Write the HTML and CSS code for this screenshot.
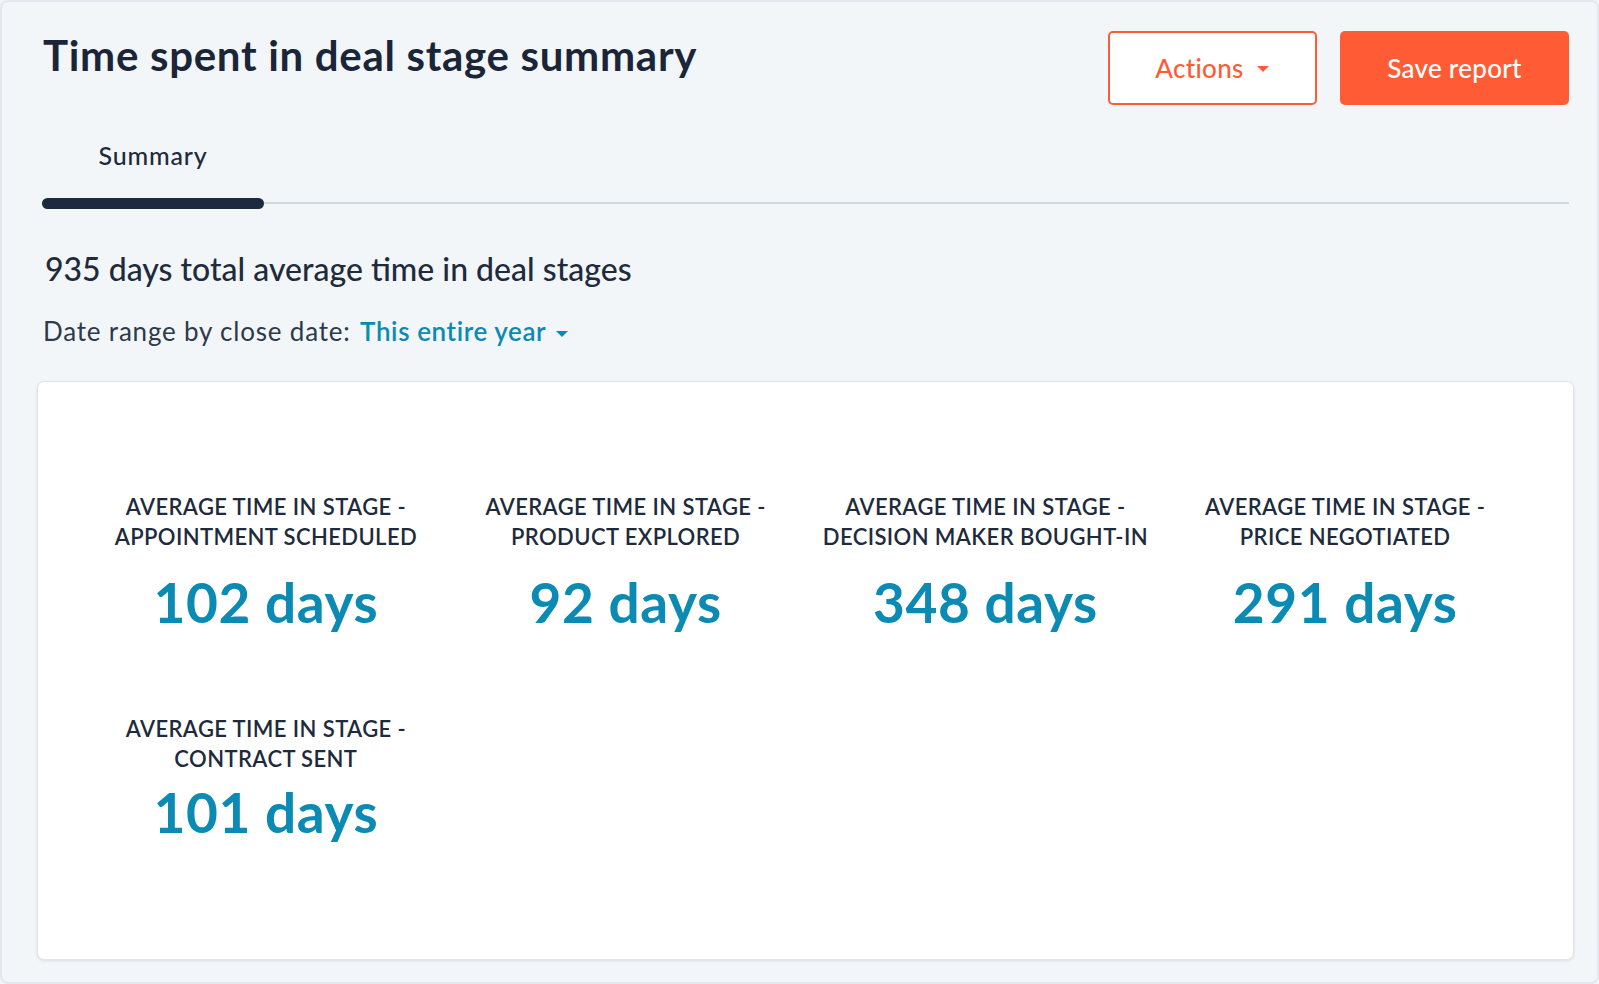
FILE: index.html
```html
<!DOCTYPE html>
<html lang="en">
<head>
    <meta charset="UTF-8">
    <meta name="viewport" content="width=device-width, initial-scale=1.0">
    <title>Time spent in deal stage summary</title>
    <link rel="stylesheet" href="styles.css">
</head>
<body>

<div class="frame">
    <header class="report-header">
        <h1>Time spent in deal stage summary</h1>
        <div class="header-actions">
            <button type="button" class="btn btn-secondary">
                Actions
                <svg class="caret" width="14" height="8" viewBox="0 0 14 8"><path d="M1 1h12L7 7z" fill="currentColor"/></svg>
            </button>
            <button type="button" class="btn btn-primary">Save report</button>
        </div>
    </header>

    <nav class="tabs">
        <a class="tab active" href="#">Summary</a>
    </nav>

    <p class="total">935 days total average time in deal stages</p>
    <p class="date-range">
        Date range by close date:
        <a href="#" class="range-link">This entire year
            <svg class="caret" width="14" height="8" viewBox="0 0 14 8"><path d="M1 1h12L7 7z" fill="currentColor"/></svg>
        </a>
    </p>

    <section class="card">
        <div class="stat-grid">
            <div class="stat">
                <div class="stat-label">Average time in stage -<br>Appointment scheduled</div>
                <div class="stat-value">102 days</div>
            </div>
            <div class="stat">
                <div class="stat-label">Average time in stage -<br>Product explored</div>
                <div class="stat-value">92 days</div>
            </div>
            <div class="stat">
                <div class="stat-label">Average time in stage -<br>Decision maker bought-in</div>
                <div class="stat-value">348 days</div>
            </div>
            <div class="stat">
                <div class="stat-label">Average time in stage -<br>Price negotiated</div>
                <div class="stat-value">291 days</div>
            </div>
            <div class="stat">
                <div class="stat-label">Average time in stage -<br>Contract sent</div>
                <div class="stat-value">101 days</div>
            </div>
        </div>
    </section>
</div>

</body>
</html>
```

FILE: styles.css
```css
* {
    box-sizing: border-box;
}
body {
    font-family: Lato, "Open Sans", sans-serif;
    margin: 0;
    background-color: #f2f5f8;
    color: #1e2b3c;
}
.frame {
    height: 984px;
    padding: 0 28px 0 40px;
    border: 2px solid #e3e8ee;
    border-radius: 8px;
    background-color: #f3f6f9;
}

/* header */
.report-header {
    display: flex;
    justify-content: space-between;
    align-items: flex-start;
    padding-top: 29px;
}
.report-header h1 {
    margin: 0;
    padding: 0 0 0 1px;
    font-size: 42px;
    line-height: 48px;
    font-weight: 700;
    letter-spacing: 0.7px;
    color: #1a2638;
}
.header-actions {
    display: flex;
    gap: 23px;
}
.btn {
    height: 74px;
    border-radius: 5px;
    font-family: inherit;
    font-size: 26px;
    font-weight: 500;
    letter-spacing: 0.3px;
    cursor: pointer;
    display: flex;
    align-items: center;
    justify-content: center;
    gap: 12px;
}
.btn-secondary {
    width: 209px;
    background-color: #fff;
    border: 2px solid #ff5c35;
    color: #ff5c35;
}
.btn-secondary .caret {
    margin-top: 2px;
}
.btn-primary {
    width: 229px;
    background-color: #ff5c35;
    border: none;
    color: #fff;
}

/* tabs */
.tabs {
    display: flex;
    margin-top: 27px;
    border-bottom: 2px solid #cfd8e3;
}
.tab {
    position: relative;
    width: 222px;
    padding: 8px 0 32px;
    text-align: center;
    font-size: 25px;
    font-weight: 500;
    letter-spacing: 0.8px;
    color: #1e2b3c;
    text-decoration: none;
}
.tab.active::after {
    content: "";
    position: absolute;
    left: 0;
    right: 0;
    bottom: -7px;
    height: 11px;
    border-radius: 6px;
    background-color: #1b2a3e;
}

/* summary */
.total {
    margin: 45px 0 0 3px;
    font-size: 32px;
    font-weight: 500;
    line-height: 40px;
}
.date-range {
    margin: 25px 0 0 1px;
    font-size: 26px;
    line-height: 34px;
    letter-spacing: 0.8px;
    color: #2d3a4b;
}
.range-link {
    margin-left: 2px;
    color: #0b8bb3;
    font-weight: 600;
    letter-spacing: 0.6px;
    text-decoration: none;
}
.range-link .caret {
    margin-left: 2px;
    vertical-align: 3px;
}

/* stats card */
.card {
    margin: 33px -5px 0 -5px;
    height: 579px;
    padding: 110px 48px 0;
    background-color: #fff;
    border: 1px solid #dfe4ea;
    border-radius: 7px;
    box-shadow: 0 1px 3px rgba(45, 62, 80, 0.12);
}
.stat-grid {
    display: grid;
    grid-template-columns: repeat(4, 1fr);
    row-gap: 80px;
}
.stat {
    text-align: center;
}
.stat-label {
    font-size: 22px;
    line-height: 30px;
    font-weight: 600;
    letter-spacing: 0.4px;
    text-transform: uppercase;
    color: #1e2b3c;
}
.stat-value {
    margin-top: 18px;
    font-size: 55px;
    line-height: 64px;
    font-weight: 700;
    letter-spacing: 0.6px;
    color: #0b8bb3;
}
.stat:nth-child(n+5) .stat-value {
    margin-top: 6px;
}
```
